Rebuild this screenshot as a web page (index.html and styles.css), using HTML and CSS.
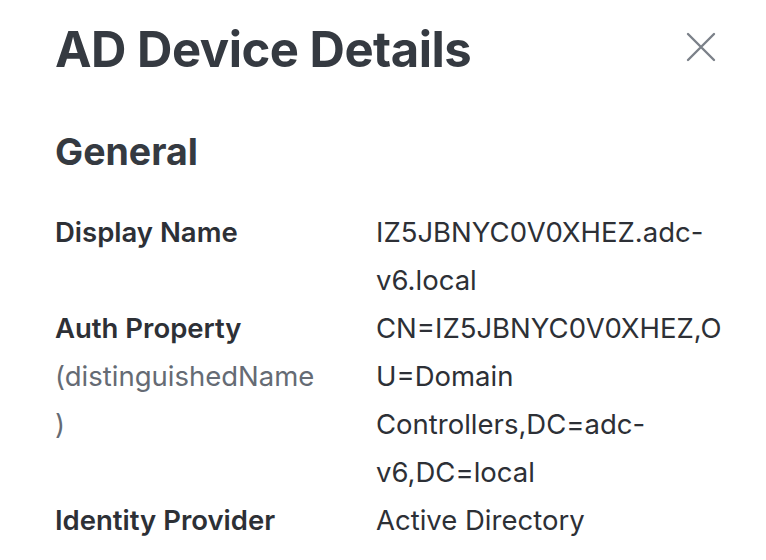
FILE: index.html
```html
<!DOCTYPE html>
<html>
<head>
<meta charset="utf-8">
<link rel="stylesheet" href="styles.css">
</head>
<body>
<div class="panel">
  <header class="head">
    <h1 class="title">AD Device Details</h1>
    <button class="close" aria-label="Close">
      <svg width="30" height="30" viewBox="0 0 30 30"><path d="M2 2 L28 28 M28 2 L2 28" stroke="#7b8189" stroke-width="2.4" stroke-linecap="round" fill="none"/></svg>
    </button>
  </header>
  <h2 class="section">General</h2>
  <dl class="grid">
    <dt class="label">Display Name</dt>
    <dd class="value">IZ5JBNYC0V0XHEZ.adc-v6.local</dd>
    <dt class="label">Auth Property <span class="sub">(distinguishedName)</span></dt>
    <dd class="value">CN=IZ5JBNYC0V0XHEZ,OU=Domain Controllers,DC=adc-v6,DC=local</dd>
    <dt class="label">Identity Provider</dt>
    <dd class="value">Active Directory</dd>
  </dl>
</div>
</body>
</html>
```
FILE: styles.css
```css
html, body { margin: 0; padding: 0; background: #fff; }
body { font-family: Inter, "Noto Sans", sans-serif; color: #2d3036; }
.panel { padding: 22px 38px 0 55px; width: 766px; box-sizing: border-box; }
.head { display: flex; justify-content: space-between; align-items: flex-start; }
.title { margin: 0; font-size: 49px; font-weight: 700; line-height: 56px; color: #353a41; letter-spacing: -0.5px; }
.close { border: 0; background: none; padding: 0; margin: 10px 12px 0 0; width: 30px; height: 30px; }
.section { margin: 54px 0 0; font-size: 37.5px; font-weight: 700; line-height: 40px; color: #353a41; }
.grid { display: grid; grid-template-columns: 266px 1fr; column-gap: 55px; margin: 36px 0 0; font-size: 27.5px; line-height: 48px; }
.label { margin: 0; font-weight: 600; }
.sub { display: block; font-weight: 400; color: #656b74; line-break: anywhere; }
.value { margin: 0; font-weight: 400; word-break: break-word; overflow-wrap: anywhere; }
```
